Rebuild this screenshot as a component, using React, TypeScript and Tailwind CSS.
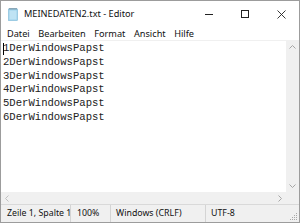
import React from "react";

const ui = { fontFamily: '"Noto Sans", "Open Sans", sans-serif' };
const mono = { fontFamily: '"Liberation Mono", "DejaVu Sans Mono", monospace' };

function NotepadIcon() {
  return (
    <svg width="10" height="13" viewBox="0 0 10 13">
      <rect x="0.5" y="1" width="9" height="11.5" fill="#9fd3ec" stroke="#7bb8d8" strokeWidth="0.6" />
      <rect x="1.5" y="2.5" width="7" height="9" fill="#bfe3f4" />
      <rect x="1" y="0" width="8" height="1.5" fill="#8aa7b8" />
    </svg>
  );
}

export default function App() {
  const lines = [1, 2, 3, 4, 5, 6].map((n) => `${n}DerWindowsPapst`);
  return (
    <div className="w-[300px] h-[223px] bg-white border border-[#9c9c9c] flex flex-col overflow-hidden text-[#000]" style={ui}>
      {/* title bar */}
      <div className="h-[26px] flex items-center shrink-0">
        <div className="pl-[7px] pr-[6px] flex items-center"><NotepadIcon /></div>
        <div className="text-[9.2px] text-[#111] whitespace-nowrap">MEINEDATEN2.txt - Editor</div>
        <div className="ml-auto flex items-center h-full">
          <div className="w-[36px] h-full flex items-center justify-center">
            <div className="w-[8px] h-px bg-[#222]" />
          </div>
          <div className="w-[36px] h-full flex items-center justify-center">
            <div className="w-[8px] h-[8px] border border-[#222]" />
          </div>
          <div className="w-[36px] h-full flex items-center justify-center">
            <svg width="9" height="9" viewBox="0 0 9 9"><path d="M0.5 0.5L8.5 8.5M8.5 0.5L0.5 8.5" stroke="#222" strokeWidth="0.9" /></svg>
          </div>
        </div>
      </div>
      {/* menu */}
      <div className="h-[13px] flex items-center text-[9.2px] text-[#111] shrink-0 pl-[6px] gap-[8.5px] whitespace-nowrap">
        <span>Datei</span>
        <span>Bearbeiten</span>
        <span>Format</span>
        <span>Ansicht</span>
        <span>Hilfe</span>
      </div>
      {/* editor */}
      <div className="flex-1 flex flex-col border-t border-[#f0f0f0] min-h-0">
        <div className="flex-1 flex min-h-0">
          <div className="flex-1 relative pt-[1px] pl-[2px] text-[10.6px] leading-[13.8px] text-[#222]" style={mono}>
            <div className="absolute left-[2px] top-[2px] w-px h-[12px] bg-black" />
            {lines.map((l) => (
              <div key={l}>{l}</div>
            ))}
          </div>
          <div className="w-[13px] bg-[#f0f0f0] flex flex-col items-center justify-between py-[4px]">
            <svg width="7" height="4" viewBox="0 0 7 4"><path d="M0.5 3.5L3.5 0.5L6.5 3.5" stroke="#a6a6a6" fill="none" /></svg>
            <svg width="7" height="4" viewBox="0 0 7 4"><path d="M0.5 0.5L3.5 3.5L6.5 0.5" stroke="#a6a6a6" fill="none" /></svg>
          </div>
        </div>
        <div className="h-[12px] flex shrink-0">
          <div className="flex-1 bg-[#f0f0f0] flex items-center justify-between px-[4px]">
            <svg width="4" height="7" viewBox="0 0 4 7"><path d="M3.5 0.5L0.5 3.5L3.5 6.5" stroke="#c0c0c0" fill="none" /></svg>
            <svg width="4" height="7" viewBox="0 0 4 7"><path d="M0.5 0.5L3.5 3.5L0.5 6.5" stroke="#a6a6a6" fill="none" /></svg>
          </div>
          <div className="w-[13px] bg-[#f0f0f0]" />
        </div>
      </div>
      {/* status bar */}
      <div className="h-[18px] flex items-center text-[8.8px] text-[#111] bg-[#f0f0f0] border-t border-[#d9d9d9] shrink-0 relative whitespace-nowrap">
        <div className="w-[70px] pl-[6px] border-r border-[#d4d4d4] h-full flex items-center overflow-hidden">Zeile 1, Spalte 1</div>
        <div className="w-[40px] pl-[6px] border-r border-[#d4d4d4] h-full flex items-center">100%</div>
        <div className="w-[95px] pl-[5px] border-r border-[#d4d4d4] h-full flex items-center">Windows (CRLF)</div>
        <div className="pl-[5px] h-full flex items-center">UTF-8</div>
        <svg className="absolute right-[1px] bottom-[1px]" width="8" height="8" viewBox="0 0 8 8">
          <g fill="#a8a8a8">
            <rect x="6" y="0" width="1" height="1" />
            <rect x="4" y="2" width="1" height="1" />
            <rect x="6" y="2" width="1" height="1" />
            <rect x="2" y="4" width="1" height="1" />
            <rect x="4" y="4" width="1" height="1" />
            <rect x="6" y="4" width="1" height="1" />
            <rect x="0" y="6" width="1" height="1" />
            <rect x="2" y="6" width="1" height="1" />
            <rect x="4" y="6" width="1" height="1" />
            <rect x="6" y="6" width="1" height="1" />
          </g>
        </svg>
      </div>
    </div>
  );
}
